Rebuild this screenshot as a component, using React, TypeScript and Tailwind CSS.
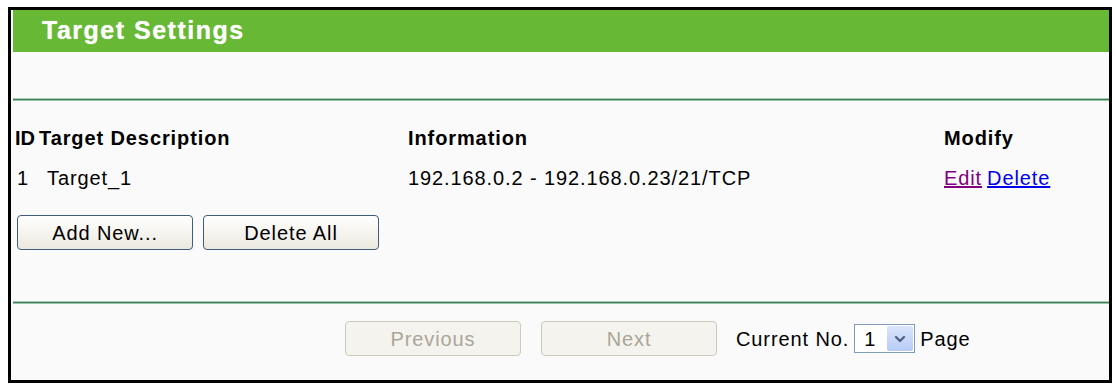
import { ChevronDown } from "lucide-react";

const font = { fontFamily: '"Liberation Sans", Arial, sans-serif' };

function GreenRule() {
  return (
    <div className="flex flex-col">
      <div className="h-px bg-[#a9cdb6]" />
      <div className="h-px bg-[#3d7d57]" />
      <div className="h-px bg-[#9cc4ab]" />
    </div>
  );
}

function ActionButton({ label }: { label: string }) {
  return (
    <button className="w-[176px] h-[35px] rounded-[4px] border border-[#3f5c78] bg-gradient-to-b from-white to-[#ebe9df] text-[20px] tracking-[0.9px] text-black">
      {label}
    </button>
  );
}

function DisabledButton({ label }: { label: string }) {
  return (
    <button
      disabled
      className="w-[176px] h-[35px] rounded-[4px] border border-[#cdcabd] bg-[#f4f3ee] text-[20px] tracking-[0.9px] text-[#aaa697]"
    >
      {label}
    </button>
  );
}

export default function App() {
  return (
    <div className="bg-white h-[387px] pt-[7px] pl-[8px]" style={font}>
      <div className="w-[1104px] h-[376px] border-[3px] border-black bg-[#fafafa] pl-[2px] flex flex-col">
        {/* Title bar */}
        <div className="h-[42px] bg-[#67b834] flex items-center pl-[29px]">
          <span className="text-[25px] font-bold tracking-[1.5px] text-white [text-shadow:0_0_1px_#d8f0c8]">
            Target Settings
          </span>
        </div>

        <div className="h-[46px]" />
        <GreenRule />

        {/* Table */}
        <div className="pt-[17px] text-[20px] tracking-[0.9px] text-black">
          <div className="flex h-[40px] items-center font-bold">
            <div className="w-[24px] pl-[2px] tracking-normal">ID</div>
            <div className="w-[371px] pl-[2px]">Target Description</div>
            <div className="w-[536px]">Information</div>
            <div>Modify</div>
          </div>
          <div className="flex h-[40px] items-center">
            <div className="w-[24px] pl-[4px]">1</div>
            <div className="w-[371px] pl-[10px]">Target_1</div>
            <div className="w-[536px]">192.168.0.2 - 192.168.0.23/21/TCP</div>
            <div className="flex gap-[5px]">
              <a className="text-[#800080] underline">Edit</a>
              <a className="text-[#0000ee] underline">Delete</a>
            </div>
          </div>
        </div>

        <div className="flex gap-[10px] pl-[4px] pt-[17px]">
          <ActionButton label="Add New..." />
          <ActionButton label="Delete All" />
        </div>

        <div className="h-[51px]" />
        <GreenRule />

        {/* Paging */}
        <div className="flex items-center pl-[332px] pt-[17px] text-[20px] tracking-[0.9px] text-black">
          <DisabledButton label="Previous" />
          <div className="ml-[20px]">
            <DisabledButton label="Next" />
          </div>
          <span className="ml-[19px]">Current No.</span>
          <div className="ml-[5px] w-[61px] h-[29px] border border-[#7f9db9] bg-white flex items-center justify-between p-px">
            <span className="pl-[8px]">1</span>
            <span className="w-[26px] h-full rounded-[2px] bg-gradient-to-b from-[#dbe6fc] to-[#b6cbf6] flex items-center justify-center">
              <ChevronDown size={16} strokeWidth={3.5} className="text-[#4d6185]" />
            </span>
          </div>
          <span className="ml-[5px]">Page</span>
        </div>
      </div>
    </div>
  );
}
